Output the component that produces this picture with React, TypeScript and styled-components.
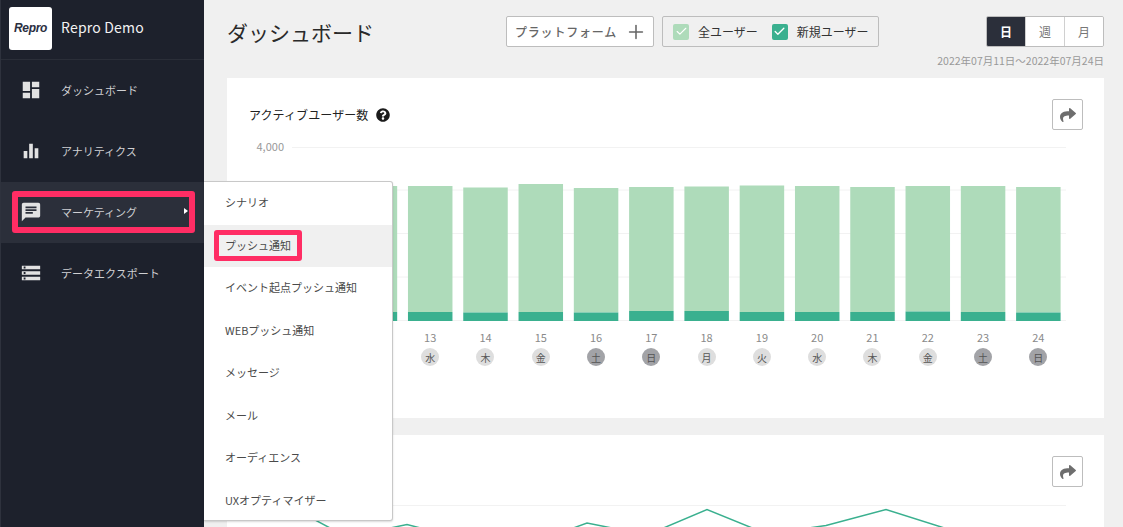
import React from "react";
import styled, { createGlobalStyle } from "styled-components";
import { MdChat, MdDashboard, MdEqualizer, MdStorage } from "react-icons/md";
import { FaQuestionCircle, FaShare } from "react-icons/fa";
import { Check, Plus } from "lucide-react";

const PLOT_W = 774;
const PLOT_H = 174;
const BAND = PLOT_W / 14;
const BAR_W = 44.5;

const bars = [
  { day: 11, week: "月", top: 186, base: 312 },
  { day: 12, week: "火", top: 186, base: 312 },
  { day: 13, week: "水", top: 186, base: 312 },
  { day: 14, week: "木", top: 187.5, base: 312.5 },
  { day: 15, week: "金", top: 184, base: 312 },
  { day: 16, week: "土", top: 188, base: 312.5 },
  { day: 17, week: "日", top: 187, base: 311 },
  { day: 18, week: "月", top: 186.5, base: 311 },
  { day: 19, week: "火", top: 185.5, base: 312 },
  { day: 20, week: "水", top: 186, base: 312 },
  { day: 21, week: "木", top: 187, base: 312 },
  { day: 22, week: "金", top: 186, base: 311.5 },
  { day: 23, week: "土", top: 186, base: 312 },
  { day: 24, week: "日", top: 187, base: 312.5 },
];

// x, y in page px of the second chart, shifted into the svg when drawn
const linePoints = [
  [287, 505], [347, 537], [407, 524.5], [467, 540], [527, 545], [587, 523],
  [647, 535], [707, 509.5], [767, 534], [826, 525.5], [886, 509.5], [946, 528.5],
  [1006, 536], [1066, 530],
];

const menuItems = [
  "シナリオ",
  "プッシュ通知",
  "イベント起点プッシュ通知",
  "WEBプッシュ通知",
  "メッセージ",
  "メール",
  "オーディエンス",
  "UXオプティマイザー",
];

export default function App() {
  return (
    <>
      <GlobalStyle />
      <Page>
        <Sidebar>
          <Brand>
            <Logo>Repro</Logo>
            <BrandName>Repro Demo</BrandName>
          </Brand>
          <NavItem>
            <NavIcon><MdDashboard size={22} /></NavIcon>
            ダッシュボード
          </NavItem>
          <NavItem>
            <NavIcon><MdEqualizer size={22} /></NavIcon>
            アナリティクス
          </NavItem>
          <NavItem $active>
            <NavIcon><MdChat size={22} /></NavIcon>
            マーケティング
            <Caret />
            <NavHighlight />
            <Flyout>
              {menuItems.map((label, i) => (
                <FlyoutItem key={label} $active={i === 1}>
                  {label}
                  {i === 1 && <FlyoutHighlight />}
                </FlyoutItem>
              ))}
            </Flyout>
          </NavItem>
          <NavItem>
            <NavIcon><MdStorage size={22} /></NavIcon>
            データエクスポート
          </NavItem>
        </Sidebar>

        <Main>
          <TopRow>
            <Title>ダッシュボード</Title>
            <PlatformButton>
              プラットフォーム
              <Plus size={22} strokeWidth={1.7} />
            </PlatformButton>
            <FilterGroup>
              <CheckBox $muted><Check size={13} strokeWidth={2} /></CheckBox>
              <FilterLabel>全ユーザー</FilterLabel>
              <CheckBox><Check size={13} strokeWidth={2.4} /></CheckBox>
              <FilterLabel>新規ユーザー</FilterLabel>
            </FilterGroup>
            <PeriodToggle>
              <PeriodButton $active>日</PeriodButton>
              <PeriodButton>週</PeriodButton>
              <PeriodButton>月</PeriodButton>
            </PeriodToggle>
          </TopRow>
          <DateRange>2022年07月11日〜2022年07月24日</DateRange>

          <Card>
            <CardHeader>
              <CardTitle>
                アクティブユーザー数
                <FaQuestionCircle size={14} color="#1b1b1b" />
              </CardTitle>
              <ShareButton><FaShare size={16} /></ShareButton>
            </CardHeader>
            <ChartRow>
              <YAxis>
                <YLabel>4,000</YLabel>
              </YAxis>
              <PlotColumn>
                <svg width={PLOT_W} height={PLOT_H} viewBox={`0 0 ${PLOT_W} ${PLOT_H}`} style={{ display: "block" }}>
                  {[0.5, 43, 86.5, 130, 173.5].map((y) => (
                    <line key={y} x1={0} x2={PLOT_W} y1={y} y2={y} stroke="#f2f2f2" />
                  ))}
                  {bars.map((b, i) => {
                    const x = i * BAND + (BAND - BAR_W) / 2;
                    return (
                      <g key={b.day}>
                        <rect x={x} y={b.top - 147} width={BAR_W} height={b.base - b.top} fill="#aedbba" />
                        <rect x={x} y={b.base - 147} width={BAR_W} height={321 - b.base} fill="#3ab08f" />
                      </g>
                    );
                  })}
                </svg>
                <XAxis>
                  {bars.map((b) => (
                    <XTick key={b.day}>
                      <DayNumber>{b.day}</DayNumber>
                      <WeekBadge $weekend={b.week === "土" || b.week === "日"}>{b.week}</WeekBadge>
                    </XTick>
                  ))}
                </XAxis>
              </PlotColumn>
            </ChartRow>
          </Card>

          <Card>
            <CardHeader>
              <CardTitle />
              <ShareButton><FaShare size={16} /></ShareButton>
            </CardHeader>
            <ChartRow $tight>
              <YAxis />
              <PlotColumn>
                <svg width={PLOT_W} height={60} viewBox={`0 0 ${PLOT_W} 60`} style={{ display: "block", overflow: "visible" }}>
                  <line x1={0} x2={PLOT_W} y1={0.5} y2={0.5} stroke="#f2f2f2" />
                  <polyline
                    fill="none"
                    stroke="#3ab08f"
                    strokeWidth={1.5}
                    points={linePoints.map(([x, y]) => `${x - 292},${y - 505}`).join(" ")}
                  />
                </svg>
              </PlotColumn>
            </ChartRow>
          </Card>
        </Main>
      </Page>
    </>
  );
}

const GlobalStyle = createGlobalStyle`
  html, body {
    margin: 0;
    padding: 0;
    height: 100%;
    overflow: hidden;
  }
  body {
    font-family: "Noto Sans CJK JP", "Noto Sans", sans-serif;
    background: #f0f0f0;
  }
`;

const Page = styled.div`
  display: flex;
  height: 527px;
  overflow: hidden;
`;

const Sidebar = styled.nav`
  box-sizing: border-box;
  flex: 0 0 204px;
  background: #1d212c;
  border-left: 1px solid #2e323d;
  position: relative;
  z-index: 2;
`;

const Brand = styled.div`
  box-sizing: border-box;
  height: 60px;
  display: flex;
  align-items: center;
  gap: 9px;
  padding: 0 0 3px 8px;
  border-bottom: 1px solid #2a2e38;
`;

const Logo = styled.div`
  width: 43px;
  height: 43px;
  background: #fff;
  border-radius: 3px;
  display: flex;
  align-items: center;
  justify-content: center;
  font-family: "Liberation Sans", sans-serif;
  font-weight: 700;
  font-style: italic;
  font-size: 12px;
  letter-spacing: -0.3px;
  color: #2b2f3f;
`;

const BrandName = styled.div`
  color: #f2f2f2;
  font-size: 14px;
  line-height: 18px;
  margin-bottom: 2px;
  letter-spacing: 0.2px;
`;

const NavItem = styled.div<{ $active?: boolean }>`
  box-sizing: border-box;
  position: relative;
  height: 61px;
  display: flex;
  align-items: center;
  padding: 0 0 2px 19px;
  font-size: 11px;
  color: #cfd0d3;
  background: ${(p) => (p.$active ? "#2b2f3a" : "transparent")};
`;

const NavIcon = styled.span`
  display: flex;
  width: 22px;
  margin-right: 19px;
  color: #e2e2e2;
`;

const Caret = styled.span`
  position: absolute;
  right: 16px;
  top: 26px;
  border-left: 4px solid #fff;
  border-top: 3.5px solid transparent;
  border-bottom: 3.5px solid transparent;
`;

const NavHighlight = styled.span`
  position: absolute;
  box-sizing: border-box;
  left: 11px;
  top: 9px;
  width: 183px;
  height: 42px;
  border: 6px solid #ff2d64;
  border-radius: 3px;
`;

const Flyout = styled.div`
  position: absolute;
  box-sizing: border-box;
  left: 100%;
  top: -1px;
  width: 189px;
  height: 340px;
  background: #fff;
  border: 1px solid #c8c8c8;
  border-left: none;
  border-radius: 0 3px 3px 0;
  box-shadow: 0 1px 2px rgba(0, 0, 0, 0.15);
  color: #4a4a4a;
`;

const FlyoutItem = styled.div<{ $active?: boolean }>`
  box-sizing: border-box;
  position: relative;
  height: 42.5px;
  display: flex;
  align-items: center;
  padding: 0 0 2px 21px;
  font-size: 11px;
  background: ${(p) => (p.$active ? "#f0f0f0" : "transparent")};
`;

const FlyoutHighlight = styled.span`
  position: absolute;
  box-sizing: border-box;
  left: 10px;
  top: 5px;
  width: 88px;
  height: 31px;
  border: 5px solid #ff2d64;
  border-radius: 3px;
`;

const Main = styled.main`
  flex: 1;
  min-width: 0;
  padding: 16px 19px 0 23px;
`;

const TopRow = styled.div`
  display: flex;
  align-items: center;
  height: 31px;
`;

const Title = styled.h1`
  flex: 0 0 279px;
  margin: 0;
  font-size: 21px;
  font-weight: 400;
  color: #2a2a2a;
`;

const PlatformButton = styled.div`
  box-sizing: border-box;
  width: 148px;
  height: 31px;
  display: flex;
  align-items: center;
  justify-content: space-between;
  padding: 0 6px 0 8px;
  background: #fff;
  border: 1px solid #bdbdbd;
  border-radius: 2px;
  font-size: 12px;
  letter-spacing: 0.8px;
  font-weight: 500;
  color: #666;
`;

const FilterGroup = styled.div`
  box-sizing: border-box;
  width: 217px;
  height: 31px;
  margin-left: 8px;
  display: flex;
  align-items: center;
  padding-left: 10px;
  border: 1px solid #bdbdbd;
  border-radius: 2px;
`;

const CheckBox = styled.span<{ $muted?: boolean }>`
  flex: none;
  width: 16px;
  height: 16px;
  display: flex;
  align-items: center;
  justify-content: center;
  border-radius: 2px;
  color: #fff;
  background: ${(p) => (p.$muted ? "#aedbba" : "#3ab08f")};
`;

const FilterLabel = styled.span`
  flex: none;
  margin: 0 14px 0 9px;
  font-size: 12px;
  white-space: nowrap;
  color: #333;
  &:last-child {
    margin-right: 0;
  }
`;

const PeriodToggle = styled.div`
  box-sizing: border-box;
  width: 118px;
  height: 31px;
  margin-left: auto;
  display: flex;
  border: 1px solid #bdbdbd;
  border-radius: 2px;
  overflow: hidden;
`;

const PeriodButton = styled.div<{ $active?: boolean }>`
  flex: 1;
  display: flex;
  align-items: center;
  justify-content: center;
  font-size: 12px;
  font-weight: ${(p) => (p.$active ? 700 : 400)};
  color: ${(p) => (p.$active ? "#fff" : "#777")};
  background: ${(p) => (p.$active ? "#2b2f3a" : "#fff")};
  & + & {
    border-left: 1px solid #d0d0d0;
  }
`;

const DateRange = styled.div`
  margin: 7px 0 10px;
  text-align: right;
  font-size: 10.5px;
  line-height: 14px;
  color: #999;
`;

const Card = styled.section`
  background: #fff;
  padding: 21px 21px 52px 22px;
  & + & {
    margin-top: 17px;
  }
`;

const CardHeader = styled.div`
  display: flex;
  align-items: center;
  justify-content: space-between;
  height: 31px;
`;

const CardTitle = styled.div`
  display: flex;
  align-items: center;
  gap: 8px;
  font-size: 12px;
  letter-spacing: 0.1px;
  font-weight: 400;
  color: #222;
`;

const ShareButton = styled.div`
  box-sizing: border-box;
  width: 31px;
  height: 31px;
  display: flex;
  align-items: center;
  justify-content: center;
  background: #fff;
  border: 1px solid #bdbdbd;
  border-radius: 2px;
  color: #6e6e6e;
`;

const ChartRow = styled.div<{ $tight?: boolean }>`
  display: flex;
  margin-top: ${(p) => (p.$tight ? "18px" : "17px")};
`;

const YAxis = styled.div`
  box-sizing: border-box;
  flex: 0 0 43px;
  margin-top: -8px;
  padding-right: 8px;
`;

const YLabel = styled.div`
  text-align: right;
  font-size: 11px;
  line-height: 14px;
  color: #999;
`;

const PlotColumn = styled.div`
  width: ${PLOT_W}px;
`;

const XAxis = styled.div`
  display: flex;
  padding-top: 9px;
`;

const XTick = styled.div`
  flex: 1;
  display: flex;
  flex-direction: column;
  align-items: center;
  gap: 4px;
`;

const DayNumber = styled.div`
  font-size: 11px;
  line-height: 14px;
  color: #8a8a8a;
`;

const WeekBadge = styled.div<{ $weekend?: boolean }>`
  width: 18px;
  height: 18px;
  border-radius: 50%;
  display: flex;
  align-items: center;
  justify-content: center;
  font-size: 10px;
  color: #555;
  background: ${(p) => (p.$weekend ? "#a2a3a7" : "#dedede")};
`;
